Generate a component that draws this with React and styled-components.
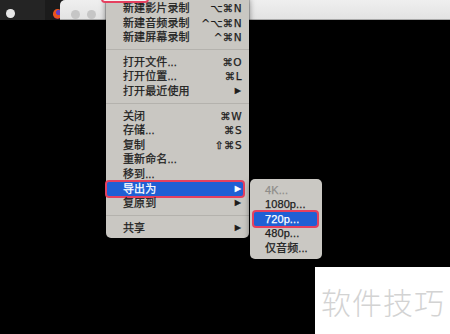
import React from "react";
import styled, { createGlobalStyle } from "styled-components";

const Global = createGlobalStyle`
  html, body { margin: 0; padding: 0; background: #000; }
  body { width: 450px; height: 334px; overflow: hidden; position: relative;
    font-family: "Liberation Sans", "Noto Sans CJK SC", "DejaVu Sans", sans-serif; }
  #root { width: 450px; height: 334px; position: relative; overflow: hidden; }
`;

const Screen = styled.div`
  position: relative;
  width: 450px;
  height: 334px;
  background: #000;
  overflow: hidden;
`;

const TopBar = styled.div`
  display: flex;
  height: 20px;
`;

const Dock = styled.div`
  width: 62px;
  display: flex;
  align-items: flex-start;
  padding-top: 9px;
  box-sizing: border-box;
  background: linear-gradient(to right, #242424 0 45px, #1b1b1b 45px);
`;

const DockDot = styled.span`
  width: 9px;
  height: 9px;
  border-radius: 50%;
  background: #e6e6e6;
  margin-left: 6px;
`;

const FoxIcon = styled.span`
  width: 10px;
  height: 10px;
  border-radius: 50%;
  margin-left: 38px;
  background: radial-gradient(circle at 60% 35%, #6a3fc0 0 30%, #e95420 32% 70%, #c22f5e 72%);
`;

const WindowBar = styled.div`
  flex: 1;
  display: flex;
  align-items: flex-start;
  gap: 7px;
  padding: 9.5px 0 0 11px;
  box-sizing: border-box;
  background: linear-gradient(#efefef, #e3e3e3);
  border-top-left-radius: 5px;
  border-bottom: 1px solid #a9a9a9;
  margin-left: -2px;
  position: relative;
  z-index: 1;
`;

const Light = styled.span`
  display: block;
  flex: none;
  width: 9px;
  height: 9px;
  border-radius: 50%;
  background: #c6c6c6;
`;

const MenuTab = styled.div`
  position: absolute;
  left: 101px;
  top: -20px;
  width: 44px;
  height: 19px;
  border: 2px solid #e5405f;
  border-radius: 4px;
  background: #f4f4f4;
  z-index: 3;
`;

const Menu = styled.div`
  position: absolute;
  left: 106px;
  top: -3px;
  width: 143px;
  padding: 4px 0 3px;
  background: #c9c7c2;
  border-radius: 0 0 5px 5px;
  box-shadow: 0 2px 6px rgba(0,0,0,0.5), 0 0 0 0.5px rgba(0,0,0,0.35);
  z-index: 2;
`;

const SubMenu = styled(Menu)`
  left: 250px;
  top: 179px;
  width: 72px;
  padding: 3.5px 0 4px;
  border-radius: 5px;
  background: #cac8c3;
`;

const Row = styled.div`
  position: relative;
  display: flex;
  align-items: center;
  justify-content: space-between;
  height: 14.6px;
  box-sizing: border-box;
  padding: ${p => (p.$active ? "0 1px 0 16px" : "0 7px 0 17px")};
  margin: ${p => (p.$active ? "0 6px 0 1px" : "0")};
  font-size: 11px;
  line-height: 14.6px;
  -webkit-text-stroke: 0.25px currentColor;
  color: ${p => (p.$active ? "#fff" : p.$disabled ? "#8e8d8a" : "#1c1c1c")};
  background: ${p => (p.$active ? "#1f5fd4" : "transparent")};
  border-radius: ${p => (p.$active ? "2px" : "0")};
  box-shadow: ${p => (p.$active ? "0 0 0 2px #e5405f" : "none")};
  white-space: nowrap;
`;

const SubRow = styled(Row)`
  padding: ${p => (p.$active ? "0 0 0 11px" : "0 0 0 15px")};
  margin: ${p => (p.$active ? "0 5px 0 4px" : "0")};
`;

const Label = styled.span`
  letter-spacing: 0.1px;
`;

const Shortcut = styled.span`
  font-family: "DejaVu Sans", sans-serif;
  font-size: 10.5px;
  letter-spacing: 0.4px;
`;

const Arrow = styled.span`
  font-family: "DejaVu Sans", sans-serif;
  font-size: 8px;
  margin-right: 1px;
`;

const Sep = styled.div`
  height: 1px;
  background: #b4b2ad;
  margin: 4.5px 0;
`;

const Watermark = styled.div`
  position: absolute;
  left: 315px;
  top: 267px;
  right: 0;
  bottom: 0;
  background: #fff;
  display: flex;
  align-items: center;
  padding-left: 6px;
  z-index: 4;
`;

const WatermarkText = styled.span`
  font-family: "Noto Sans CJK SC", sans-serif;
  font-weight: 300;
  font-size: 30px;
  letter-spacing: 1px;
  color: #d3d3d3;
`;

const groups = [
  [
    ["新建影片录制", "⌥⌘N"],
    ["新建音频录制", "^⌥⌘N"],
    ["新建屏幕录制", "^⌘N"],
  ],
  [
    ["打开文件...", "⌘O"],
    ["打开位置...", "⌘L"],
    ["打开最近使用", "▶"],
  ],
  [
    ["关闭", "⌘W"],
    ["存储...", "⌘S"],
    ["复制", "⇧⌘S"],
    ["重新命名...", ""],
    ["移到...", ""],
    ["导出为", "▶", true],
    ["复原到", "▶"],
  ],
  [["共享", "▶"]],
];

const sub = [
  ["4K...", false, true],
  ["1080p...", false, false],
  ["720p...", true, false],
  ["480p...", false, false],
  ["仅音频...", false, false],
];

export default function App() {
  return (
    <Screen>
      <Global />
      <TopBar>
        <Dock>
          <DockDot />
          <FoxIcon />
        </Dock>
        <WindowBar>
          <Light />
          <Light />
        </WindowBar>
      </TopBar>
      <MenuTab />
      <Menu>
        {groups.map((g, gi) => (
          <React.Fragment key={gi}>
            {gi > 0 && <Sep />}
            {g.map(([label, sc, active]) => (
              <Row key={label} $active={active}>
                <Label>{label}</Label>
                {sc === "▶" ? <Arrow>▶</Arrow> : <Shortcut>{sc}</Shortcut>}
              </Row>
            ))}
          </React.Fragment>
        ))}
      </Menu>
      <SubMenu>
        {sub.map(([label, active, disabled]) => (
          <SubRow key={label} $active={active} $disabled={disabled}>
            <Label>{label}</Label>
          </SubRow>
        ))}
      </SubMenu>
      <Watermark>
        <WatermarkText>软件技巧</WatermarkText>
      </Watermark>
    </Screen>
  );
}
